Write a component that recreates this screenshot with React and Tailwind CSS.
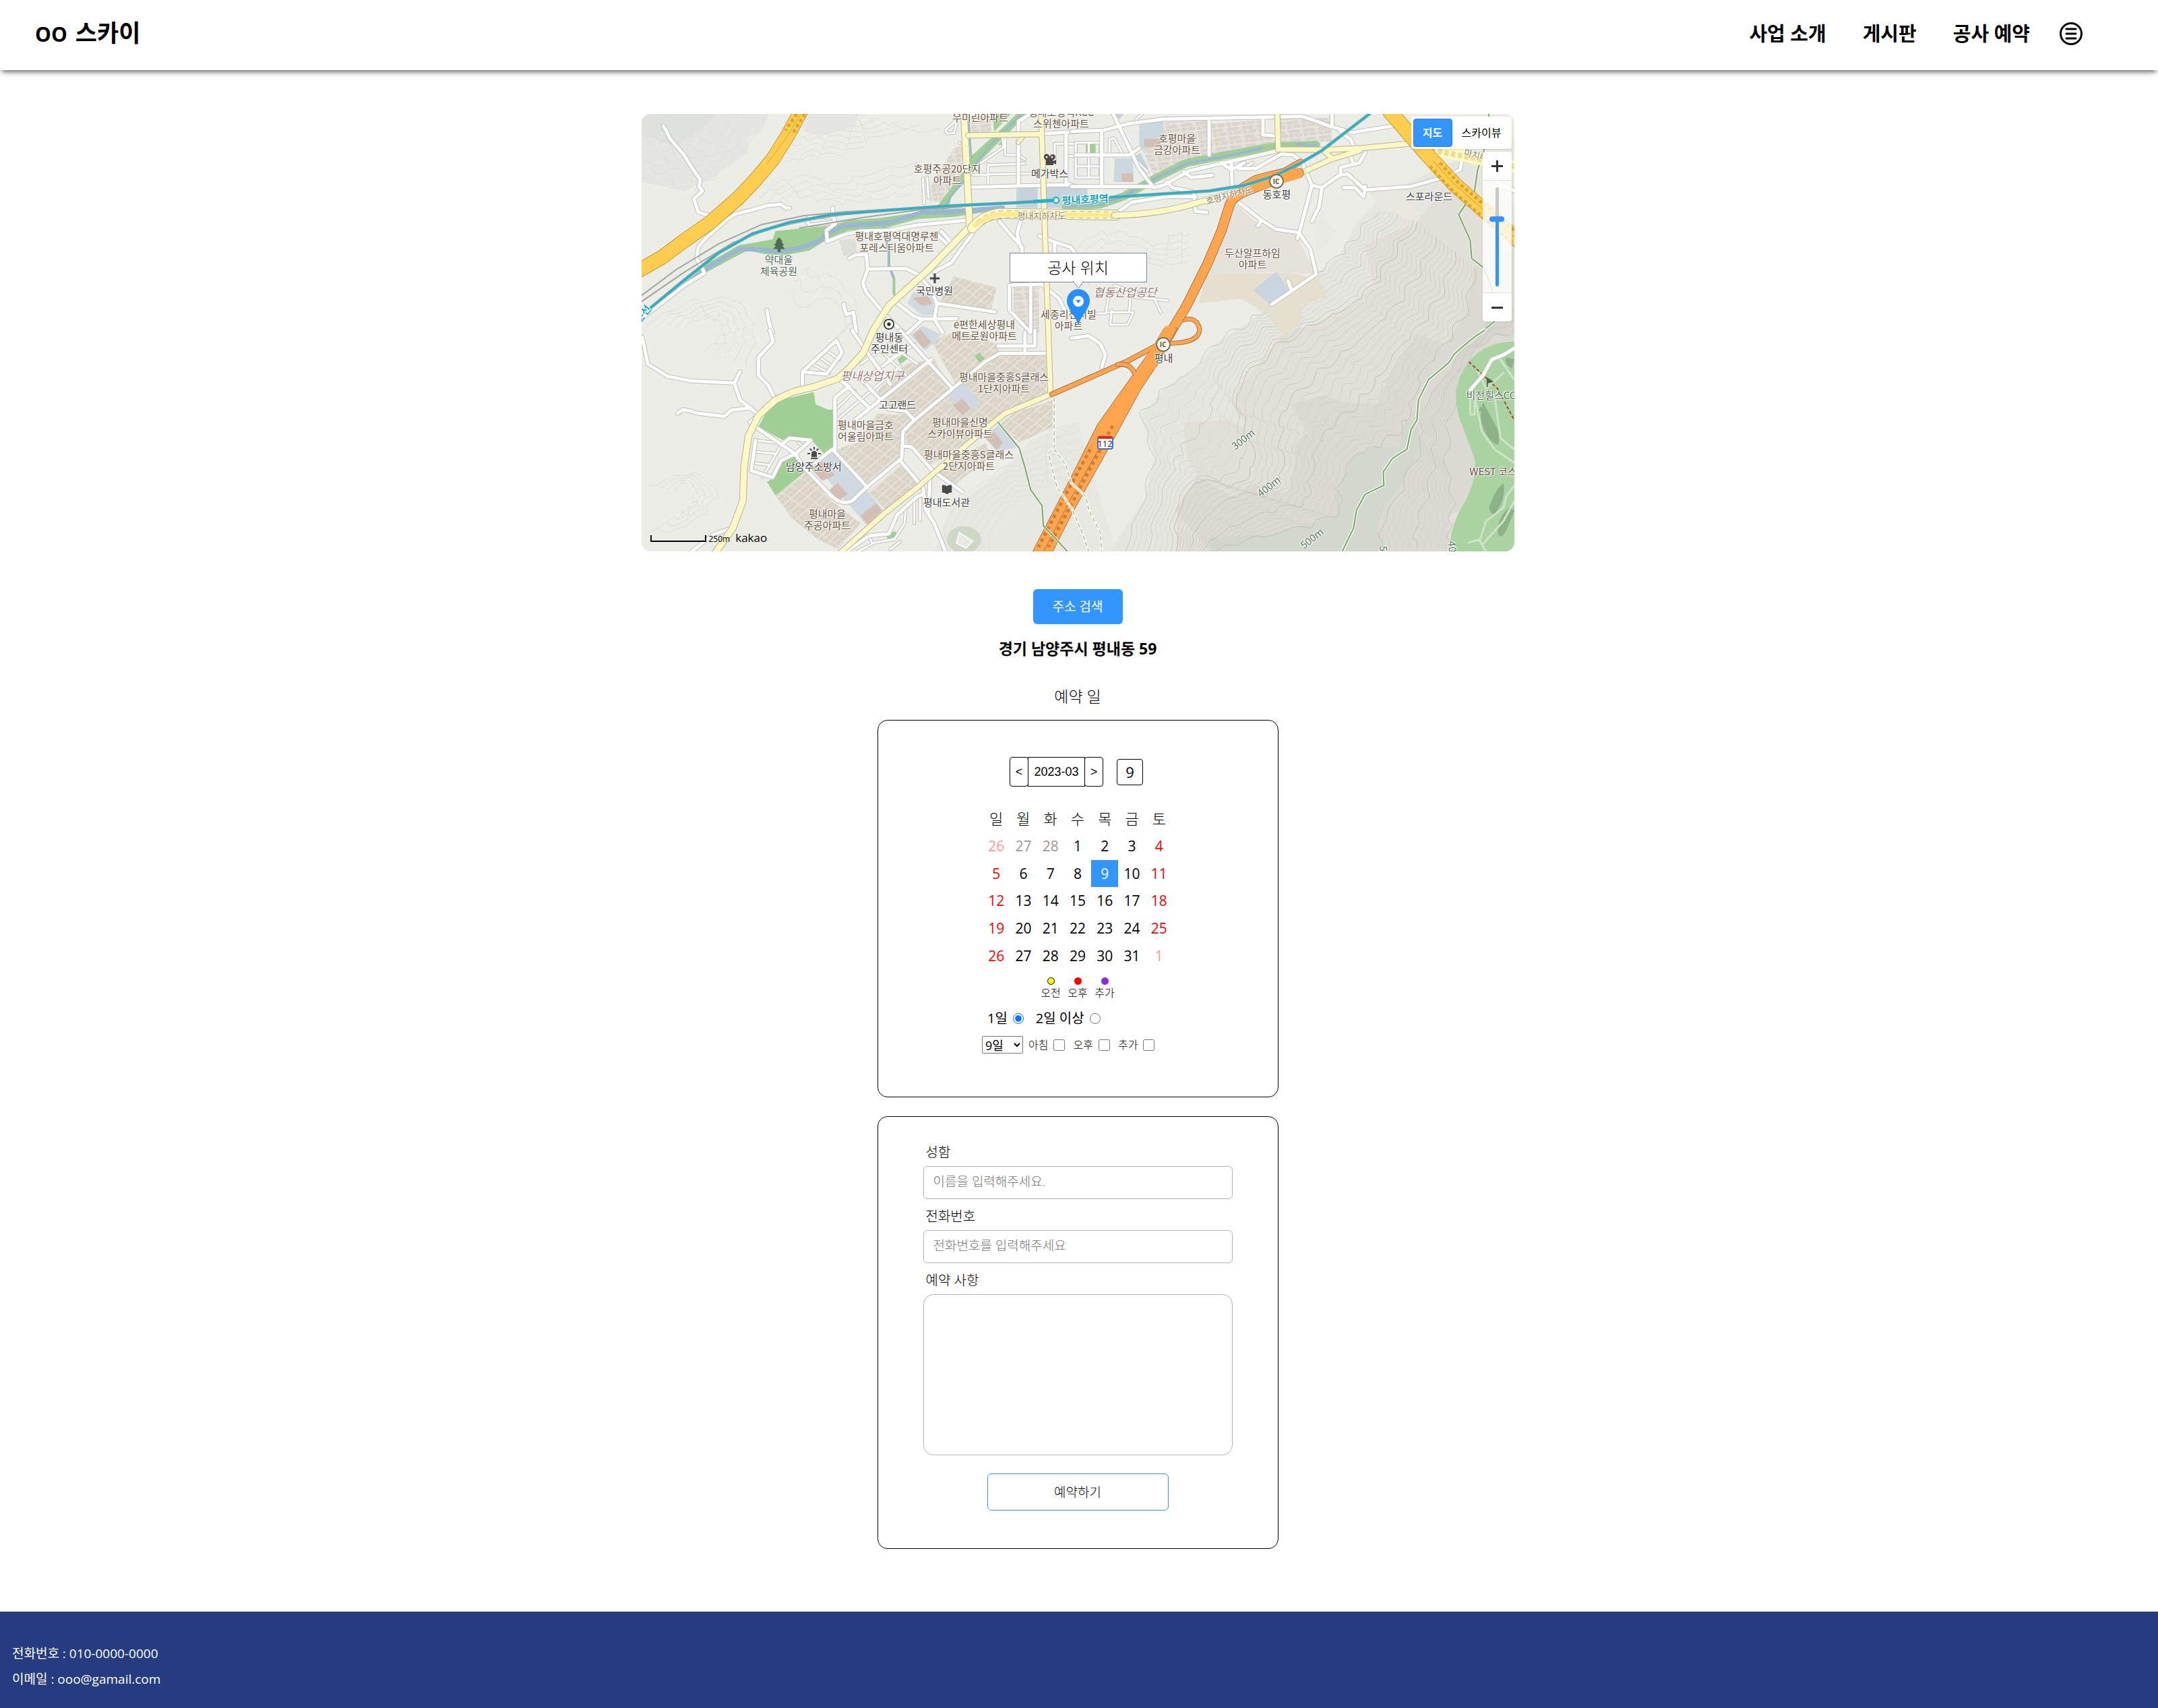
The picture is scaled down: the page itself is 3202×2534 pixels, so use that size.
import React from "react";

const MAP_W = 1295;
const MAP_H = 649;
const TR = "translate(1544 0) scale(1.0154 1)";
const BL = "translate(0 990)";
const BR = "translate(1544 990) scale(1.0154 1)";

/* ---------- terrain contours ---------- */

function refine(points) {
  const out = [];
  for (let i = 0; i < points.length - 1; i++) {
    const [x1, y1] = points[i];
    const [x2, y2] = points[i + 1];
    for (let s = 0; s < 4; s++) {
      const t = s / 4;
      const k = i * 4 + s;
      out.push([
        x1 + (x2 - x1) * t + 16 * Math.sin(k * 1.9),
        y1 + (y2 - y1) * t + 20 * Math.cos(k * 2.3),
      ]);
    }
  }
  out.push(points[points.length - 1]);
  return out;
}

function smooth(points) {
  let d = `M${points[0][0]} ${points[0][1]}`;
  for (let i = 1; i < points.length - 1; i++) {
    const mx = (points[i][0] + points[i + 1][0]) / 2;
    const my = (points[i][1] + points[i + 1][1]) / 2;
    d += `Q${points[i][0]} ${points[i][1]} ${mx} ${my}`;
  }
  const last = points[points.length - 1];
  return `${d}L${last[0]} ${last[1]}`;
}

function between(a, b, n) {
  const ra = refine(a);
  const rb = refine(b);
  return Array.from({ length: n + 1 }, (_, i) => {
    const t = i / n;
    return smooth(ra.map((p, k) => [p[0] + (rb[k][0] - p[0]) * t, p[1] + (rb[k][1] - p[1]) * t]));
  });
}

const SLOPE_OUT = [[180, 985], [250, 760], [290, 560], [240, 380], [330, 250], [420, 180], [500, 60], [620, -40], [700, -120], [820, -220], [930, -330], [990, -420], [1080, -560]];
const SLOPE_MID = [[360, 985], [370, 800], [440, 660], [570, 700], [640, 600], [600, 420], [570, 270], [690, 90], [830, -20], [960, -100], [1050, -200], [1120, -340], [1200, -480]];
const SLOPE_IN = [[480, 985], [620, 930], [830, 870], [940, 800], [920, 700], [980, 560], [1060, 520], [1150, 440], [1180, 330], [1220, 180], [1300, 60], [1370, -80], [1400, -280]];
const EAST_OUT = [[1070, 985], [1080, 860], [1150, 700], [1220, 500], [1200, 380], [1290, 220], [1380, 60], [1538, -100]];
const EAST_IN = [[1315, 985], [1310, 880], [1330, 760], [1300, 600], [1310, 400], [1360, 200], [1420, 60], [1538, 0]];

const WEST_LINES = [
  ...between([[30, 300], [120, 330], [220, 370], [300, 280], [370, 200], [440, 110], [480, 27]], [[30, 120], [80, 150], [120, 160], [170, 150], [220, 120], [250, 80], [290, 27]], 5),
  ...between([[620, 27], [600, 110], [680, 115], [780, 90], [800, 50], [790, 27]], [[480, 200], [560, 240], [640, 215], [760, 200], [850, 120], [1080, 90]], 4),
  ...between([[420, 360], [520, 330], [620, 300], [700, 350], [800, 300], [1000, 240]], [[500, 420], [560, 380], [640, 410], [760, 420], [860, 400], [980, 380]], 3),
  ...between([[40, 960], [200, 860], [350, 850], [400, 900], [430, 1000], [400, 1150]], [[180, 960], [250, 930], [280, 940], [320, 970], [300, 1040], [250, 1080]], 4),
  ...between([[40, 1880], [160, 1880], [260, 1800], [300, 1700], [200, 1620], [60, 1680]], [[160, 1800], [190, 1790], [215, 1750], [220, 1690], [180, 1660], [150, 1700]], 3),
  ...between([[540, 800], [600, 900], [660, 850], [720, 860], [760, 960], [700, 1050]], [[600, 700], [640, 760], [690, 740], [740, 790], [800, 900], [740, 1010]], 2),
  ...between([[1568, 600], [1640, 560], [1740, 560], [1850, 620], [1900, 560], [1960, 560]], [[1600, 780], [1640, 700], [1720, 740], [1820, 700], [1900, 690], [1960, 680]], 4),
  ...between([[1080, 1974], [1120, 1780], [1260, 1640], [1380, 1560], [1490, 1420], [1560, 1400]], [[1240, 1974], [1270, 1850], [1340, 1760], [1420, 1700], [1470, 1650], [1560, 1640]], 6),
];

/* ---------- map drawing ---------- */

function Line({ d, w, c, dash, cap = "round" }) {
  return (
    <path d={d} fill="none" stroke={c} strokeWidth={w} strokeDasharray={dash} strokeLinecap={cap} strokeLinejoin="round" vectorEffect="non-scaling-stroke" />
  );
}

function Road({ d, w, c = "#ffffff", edge = "#bfbeb7" }) {
  return (
    <>
      <Line d={d} w={w + 2} c={edge} />
      <Line d={d} w={w} c={c} />
    </>
  );
}

const LOCAL_TL = "M105 80L130 140L175 205L205 265L235 320L230 350L243 370L212 405L228 465L265 478M550 447L535 445L520 430L470 435L440 447L360 472L325 500L300 530L255 580L228 620L222 670L240 710L250 735L180 790L30 935M702 445V475L712 515L680 545L682 595L740 565L800 548L900 545L1000 522L1175 500M700 485H620Q605 505 622 522L700 510M1190 353L1530 342L1568 352M1450 115L1568 105M1400 27L1357 60V340M1525 110V330L1540 342M1290 505L1330 565L1370 620V650M1365 505L1352 560L1365 620M1430 570L1480 595L1540 620L1560 650M1485 600V645M1195 560L1165 610L1120 690L1060 730M1065 560L1110 610M1085 550L1120 600M760 670L780 655L820 652L825 718L960 715L1000 740L1045 800L1070 870L1275 908M825 720L808 780L820 820L900 940L960 1010M930 870L985 925L1015 940L1140 938M1070 870L1060 940L1090 1000M1020 940L960 1010M740 875L750 920L775 910L785 1000M470 900L478 960L490 1000M1325 790V900L1400 1000V780M1325 790L1440 785L1500 850L1520 900";
const MINOR_TL = "M1145 40L1135 60L1100 98L1105 115L1130 112L1138 70M1150 155V158M1020 315L1025 425M1035 310L1040 400M1225 245L1305 175L1300 130M1250 250V340M1195 298L1400 292M1250 255L1380 248M1310 210H1360L1380 230M1310 130V205M1485 160H1560V310M1485 160V240M1530 215H1568";
const LOCAL_TR = "M0 105L110 100L200 70L320 50L800 38L830 50L905 85L975 110L1115 80M145 27L235 270L285 355L320 345L410 280L530 245L720 190M0 350H280M478 50V210M665 45V120L715 125M905 27V80M165 460L210 420L330 395L430 395M330 330L350 355L425 375L430 460L470 465M390 285L415 310L490 300M555 245L558 345M520 245L555 275L600 245M580 270L640 270L730 205L770 210L800 240L820 300L835 345L870 355L930 300L960 295L1020 365L1180 350L1290 310L1350 275L1355 240M835 345L790 560M870 355L860 440L835 505M580 420L660 500L710 540L790 555L830 630L850 740L765 815L695 875M660 500L648 525M790 560L785 580M765 815L752 770M935 295V265L1000 245L1020 200M970 220L980 250M945 355H985L1015 395L1020 350M925 90L940 115L970 140L980 170M1475 330L1538 370M105 105V350M15 210H200L235 180";
const MINOR_TR = "M15 155H100V310H15ZM60 155V310M15 260H100M132 210V140L148 135L180 210M245 27L225 50M230 240L265 285M130 830L120 910H215L195 965H135L140 900M200 910L205 840L335 858M290 855L310 910M150 790L220 820L260 820M90 915H120M600 265L630 245";
const LOCAL_BL = "M30 30L50 150L120 205L200 225L355 235L375 185M355 235L375 310L440 375L410 410M155 370L175 352L230 370L320 383L345 355L415 345M480 0L492 50L440 120V200L475 245L500 310M595 260V185L715 45L735 100L680 195L595 185M710 530V300L760 250L725 220M770 0L830 110L905 240M940 0L1125 260M780 400L1050 130M700 530L640 590M1455 103H1290L1240 140L990 400L950 450L945 570L820 700L770 760Q735 780 700 740L600 610L570 550L430 430M705 535L825 700M740 230L830 345M820 240L900 350L960 360L990 400M945 515L980 518L1050 620L1160 720M940 580L1020 700L1030 800L1060 860L1100 985M430 490L415 625L490 655L520 580L570 550L625 490L550 480L520 510M1045 660L1040 820M750 985L830 915L900 905L930 820L1000 740L1020 730M205 985L280 910L335 885M1380 10V100M1285 70H1415V0";
const MINOR_BL = "M630 150L690 190M655 120L700 160M680 90L725 130M720 395L940 160M715 350L780 270M770 190L870 300M870 90L960 200M900 60L1000 150M800 150L880 80M830 210L960 70M880 160L990 60M520 510L455 655M430 490L500 500M425 540L500 550M420 590L480 600M580 500L600 520M960 790L955 860L920 930L850 945L790 985M990 760V860M1010 750V845M830 915L840 945M905 975L940 940";
const LOCAL_BR = "M0 35L60 25L100 60L118 110L105 165M1538 80L1500 110L1460 130L1430 200L1385 265";
const ESTATE_BL = [
  "M790 500L860 370L960 380L985 405L950 450L940 560L830 690L715 530Z",
  "M500 735L610 630L690 750L800 860L720 975L650 930L560 840Z",
  "M960 150L1060 130L1120 260L980 400L900 350L860 270Z",
  "M1050 50L1140 0L1280 60L1290 100L1140 250Z",
  "M1130 260L1240 140L1290 110H1455V300L1310 360L1230 450L1050 600L960 500L960 440Z",
  "M1340 370L1480 310V430L1360 500L1290 420Z",
  "M830 720L950 590L1010 690L890 800Z",
  "M1060 620L1100 600L1240 500L1260 560L1130 690Z",
];
const RAIL = "M60 890L180 765L300 645L420 560L550 510L700 475L900 455L1100 437L1350 422L1490 411M1681 398L1900 380L2031 370L2153 345L2255 305L2346 250L2427 190L2509 110L2595 27";

function MapDrawing() {
  return (
    <svg className="block h-full w-full" viewBox="28 27 3078 1947" preserveAspectRatio="none" aria-hidden="true">
      <defs>
        <pattern id="flats" width="46" height="38" patternUnits="userSpaceOnUse" patternTransform="rotate(-48)">
          <rect width="46" height="38" fill="#e3ded3" />
          <path d="M4 6h32v9H4zM4 24h14v9H4zM24 22h16v11H24z" fill="#dcd6c9" stroke="#d0c9bc" strokeWidth="2" />
          <path d="M0 0H46" stroke="#ebe8e0" strokeWidth="4" />
        </pattern>
        <pattern id="flatsEast" width="52" height="40" patternUnits="userSpaceOnUse" patternTransform="rotate(-8)">
          <rect width="52" height="40" fill="#e5e1d9" />
          <path d="M5 6h34v10H5zM5 24h10v12H5zM24 25h22v9H24z" fill="#ddd8cd" stroke="#d0cabf" strokeWidth="2" />
          <path d="M0 0H52" stroke="#eeece6" strokeWidth="4" />
        </pattern>
      </defs>
      <rect x="28" y="27" width="3078" height="1947" fill="#ecede7" />

      {/* hills */}
      <path d="M28 27H480L440 110L400 130L405 200L330 260L290 300L180 370L28 330Z" fill="#e5e6e1" />
      <path d="M28 27H290L250 80L150 170L28 120Z" fill="#dfe1dc" />
      <path d="M620 27L600 100L660 125L780 85L790 27Z" fill="#e5e6e1" />
      <path d="M1060 1974L1120 1780L1300 1620L1400 1480L1568 1400L1700 1974Z" fill="#e8e8e2" />
      <g transform={BR}>
        <path d="M130 985L250 760L290 560L240 380L330 250L420 180L500 60L620 -40L700 -120L820 -220L930 -330L990 -480L1080 -600L1270 -720L1540 -860V985Z" fill="#e6e6e0" />
        <path d="M360 985L370 800L440 660L400 560L390 410L540 400L620 440L570 370L570 270L690 90L750 0L830 -20L960 -100L1050 -200L1020 -380L1200 -480L1290 -620L1540 -560V985Z" fill="#e0dfd8" />
        <path d="M480 985L360 800L440 650L550 740L640 690L750 730L770 640L780 500L820 450L760 330L880 290L950 320L1060 330L1110 180L1200 20L1300 60L1370 -80L1400 -280L1540 -360V985Z" fill="#dadad3" />
        <path d="M480 985V920L700 910L930 820L910 740L980 560L1050 520L1140 520L1160 400L1190 390L1220 500L1150 680L1090 780L1060 880L1095 985Z" fill="#d3d8cf" />
        <path d="M1315 985L1310 820L1360 800V985Z" fill="#e1e0da" />
        {between(SLOPE_OUT, SLOPE_MID, 9).map((d, i) => <Line key={i} d={d} w={1} c={i % 4 === 0 ? "#c9c9c0" : "#d8d8d1"} />)}
        {between(SLOPE_MID, SLOPE_IN, 15).map((d, i) => <Line key={i} d={d} w={1} c={i % 5 === 0 ? "#c0c0b7" : "#d0d0c8"} />)}
        {between(EAST_OUT, EAST_IN, 10).map((d, i) => <Line key={i} d={d} w={1} c={i % 5 === 0 ? "#c2c2b9" : "#d2d2ca"} />)}
      </g>
      {WEST_LINES.map((d, i) => <Line key={i} d={d} w={1} c="#dddfd8" />)}

      {/* land use */}
      <g transform={TR}>
        <path d="M570 430L650 520L780 560L850 740L700 730L560 740H480L540 500Z" fill="#e5e2dc" />
        <path d="M470 740L760 735L860 760L890 840L800 880V960L740 1020L680 920L590 850L440 870Z" fill="#e4dfcf" />
        <path d="M840 540L870 455L918 550L890 600L850 640Z" fill="#e9eae4" />
        <path d="M1030 360L1150 350L1210 470L1170 500L1120 460L1070 460Z" fill="#e9e8e0" />
        <path d="M712 728L755 815L690 875L632 810Z" fill="#c8d5de" />
        <path d="M240 70L470 55V215L290 310L240 170Z" fill="url(#flatsEast)" />
        <path d="M484 70L660 55V130L710 130V165L560 195L484 210Z" fill="url(#flatsEast)" />
        <path d="M725 45L900 45L905 150L730 155Z" fill="url(#flatsEast)" />
        <path d="M235 75L318 55V130L300 175H235Z" fill="#ccd8e0" />
        <path d="M252 138h58v36h-58z" fill="#d3bfb3" />
        <path d="M150 225h62l5 105h-70z" fill="#ccd8e0" />
        <path d="M174 292h40v38h-40z" fill="#d3bfb3" />
        <path d="M50 160h34v46H50z" fill="#9fcf95" />
        <path d="M220 215l20 -15 28 70 -22 14z" fill="#c6d3dd" />
        <path d="M145 27h36l-14 24z" fill="#c6d3dd" />
      </g>
      <path d="M1350 355h75v90h-75z" fill="#c6d3dd" />
      <path d="M1455 345H1600V445H1455z" fill="#c6d3dd" />
      <path d="M1190 40h70v70h-70zM1045 350L1130 180L1160 170V320L1100 420H1045Z" fill="url(#flatsEast)" />
      <path d="M1080 860L1130 750L1280 800L1260 900Z" fill="url(#flats)" />
      <path d="M1340 800H1430V1000H1400L1340 900Z" fill="url(#flatsEast)" />
      <path d="M725 590L780 580L790 650L740 660Z" fill="#dedfd9" />
      <path d="M965 870L985 820L1050 830L1065 920L1020 925Z" fill="#d1dae1" />
      <path d="M985 845l50 -8 22 35 -42 10z" fill="#d3bfb3" />
      <g transform={BL}>
        {ESTATE_BL.map((d) => <path key={d} d={d} fill="url(#flats)" />)}
        <path d="M640 600L705 535L880 800L820 865Z" fill="#d0d9e1" />
        <path d="M1110 290L1165 235L1225 325L1165 380Z" fill="#d0d9e1" />
        <path d="M1235 470L1290 420L1355 520L1280 540Z" fill="#d0d9e1" />
        <path d="M975 20L1020 -20L1085 20L1030 90Z" fill="#d0d9e1" />
        <path d="M625 615l40 -30 45 60 -45 25zM690 710l30 -30 35 50 -30 25zM800 825l55 -55 20 35 -50 60zM1125 335l35 -30 28 42 -28 30zM1240 480l32 -30 30 50 -20 32zM985 20l25 -25 40 60 -30 26z" fill="#d3bfb3" />
        <path d="M440 430L470 360L520 310L635 275L642 330L685 353H708V530L675 555L625 485L560 475L525 488ZM470 675L490 660L520 585L575 560L610 625L500 735ZM930 130l30 -30 15 20 -35 30zM1203 115l15 -15 20 25 -18 20zM890 915l30 -22 12 18 -35 20z" fill="#9fcf95" />
        <ellipse cx="1165" cy="932" rx="60" ry="60" fill="#cfd7c5" />
        <path d="M1148 900l48 38 -24 32 -34 -22z" fill="#e8e9e2" stroke="#fff" strokeWidth="4" />
      </g>

      {/* parks and streams */}
      <path d="M180 790L250 700L370 612L490 585L500 548L690 525L760 500L870 490L1060 455L1160 290L1190 215L1300 90L1350 27H1390L1290 150L1220 240L1120 400L1110 450L1310 440V450L1130 485L1000 495L890 535L760 545L690 580L620 635L540 655H480L400 635L260 730Z" fill="#9fcf95" />
      <path d="M1265 27L1272 105L1330 27ZM1285 165L1308 130V168Z" fill="#9fcf95" />
      <Line d="M880 520L900 640V700L918 760V830" w={4} c="#9fcf95" />
      <Line d="M180 790L260 712L370 630L420 628L520 640L590 622L650 595L690 555L740 525L850 515L900 510L1020 465L1100 465L1300 445" w={7} c="#9bb7d0" />
      <Line d="M1090 460L1120 390L1170 320M1200 260L1255 170L1370 27M1180 27L1190 220M880 515L900 640V700L918 760" w={3} c="#9bb7d0" />
      <g transform={TR}>
        <Line d="M-20 440L100 430L180 395L290 315L400 245L560 205L700 172L850 164" w={12} c="#9fcf95" />
        <Line d="M-20 440L100 430L180 395L290 315L400 248L560 208L660 180M780 162L850 166" w={4} c="#9bb7d0" />
      </g>

      {/* golf course */}
      <g transform={BR}>
        <path d="M1538 50Q1440 50 1380 140Q1310 260 1350 400L1400 570Q1410 680 1350 800Q1310 900 1315 985H1540Z" fill="#a9d3a0" />
        <path d="M1430 320q-18 60 2 120q20 60 50 70q10 -50 -10 -90q-22 -50 -42 -100zM1500 680q-30 30 -50 110q10 50 30 10q30 -60 20 -120zM1520 790q-40 40 -40 110q10 40 30 -10q20 -60 30 -90zM1510 120q-10 30 20 50l8 -40zM1420 340q-14 40 10 10z" fill="#8db287" />
        <Line d="M1400 290L1425 450L1470 530L1538 590M1470 300L1490 480L1538 530M1410 180L1440 260L1500 190M1538 690L1510 740L1500 790L1440 850L1420 930L1380 945M1538 760L1500 850L1430 950M1490 130L1538 220M1385 300V375H1400V320M1415 930L1440 985" w={3} c="#cfe3c8" />
        <Line d="M1380 140L1480 260L1538 400" w={2} c="#b5442c" dash="5 3" cap="butt" />
      </g>

      {/* local roads */}
      <Road d={MINOR_TL} w={3} />
      <Road d={LOCAL_TL} w={5} />
      <g transform={TR}>
        <Road d={MINOR_TR} w={3} />
        <Road d={LOCAL_TR} w={5} />
      </g>
      <g transform={BL}>
        <Road d={MINOR_BL} w={3} />
        <Road d={LOCAL_BL} w={5} />
      </g>
      <g transform={BR}>
        <Road d={LOCAL_BR} w={5} />
      </g>

      {/* trails */}
      <g transform={TR}>
        <Line d="M1450 27V90L1435 180L1410 280L1400 370L1345 475L1385 590L1390 670L1430 710L1460 800L1470 950L1400 1020" w={4} c="#f4f5ef" />
        <Line d="M1450 27V90L1435 180L1410 280L1400 370L1345 475L1385 590L1390 670L1430 710L1460 800L1470 950L1400 1020" w={2} c="#7ba66a" />
      </g>
      <g transform={BR}>
        <Line d="M1435 0L1405 25L1380 50L1330 105L1310 145L1240 220L1205 310L1200 400L1180 440L1165 530L1115 570L1083 630L1085 690L1020 730L990 800L980 880L940 985" w={5} c="#f4f5ef" />
        <Line d="M1435 0L1405 25L1380 50L1330 105L1310 145L1240 220L1205 310L1200 400L1180 440L1165 530L1115 570L1083 630L1085 690L1020 730L990 800L980 880L940 985" w={2} c="#7ba66a" />
      </g>

      {/* yellow roads */}
      <Road d="M1165 27L1185 530L1040 720L900 880L845 990L810 1090L760 1160L720 1205L640 1240L560 1265L500 1300L440 1370L405 1460L390 1590L385 1750L350 1870L285 1985" w={9} c="#fdf8c4" edge="#b5b29b" />
      <Road d="M1378 120L1356 155" w={5} c="#fdf8c4" edge="#b5b29b" />
      <Road d="M1180 123L1435 117M1437 27L1453 650L1470 1275L1310 1360L1240 1430L1100 1580L1000 1690L880 1810L720 1990" w={7} c="#fdf8c4" edge="#b5b29b" />
      <Road d="M1195 535Q1230 480 1290 470L1700 477" w={14} c="#fdf8c4" edge="#b5b29b" />
      <Line d="M1200 530Q1240 480 1300 473L1695 477" w={6} c="#ffe88a" cap="butt" />
      <Line d="M1210 505Q1250 460 1310 458L1695 463M1230 520Q1260 490 1320 488L1695 491" w={1} c="#b5b29b" dash="7 5" cap="butt" />
      <g transform={TR}>
        <Road d="M150 478Q300 475 430 425L600 365" w={8} c="#fdf8c4" edge="#b5b29b" />
        <Road d="M715 27L718 185L890 187L1000 180L1170 160M805 285L900 230L1000 190M880 195L905 225" w={7} c="#fdf8c4" edge="#b5b29b" />
        <Line d="M1240 185L1400 222L1538 262" w={18} c="#fdf8c4" />
        <Line d="M1250 188L1400 224L1538 262" w={8} c="#f0dc8c" dash="6 4" cap="butt" />
      </g>

      {/* expressways */}
      <Road d="M590 15L540 130L490 230L430 320L370 400L270 510L180 590L100 665L10 730" w={20} c="#ffcd50" edge="#c79b34" />
      <Line d="M590 27L540 130L470 250" w={1} c="#d9a62f" />
      <Line d="M575 27L535 100M603 27L563 110" w={5} c="#d9a62f" dash="5 4" cap="butt" />
      <g transform={TR}>
        <Road d="M1105 15L1230 200L1330 340L1450 475L1570 610" w={21} c="#ffcd50" edge="#c79b34" />
        <Line d="M1255 235L1330 340L1450 475L1560 600" w={1} c="#c79b34" />
        <Line d="M1245 260L1320 365L1440 500L1545 620M1280 245L1345 335L1465 465L1570 580" w={5} c="#dba62a" dash="5 4" cap="butt" />
        <Road d="M385 945Q435 925 445 985Q445 1045 345 1048" w={5} c="#ffa54d" edge="#a8714a" />
        <Road d="M795 240L740 280L640 312L590 350" w={7} c="#ffa54d" edge="#a8714a" />
        <Road d="M790 290L700 325L610 368Q560 395 550 430L520 550L470 700L400 880L330 1030" w={13} c="#ffa54d" edge="#a8714a" />
        <Line d="M785 292L700 322L620 355" w={16} c="#ffa54d" />
      </g>
      <g transform={BR}>
        <Road d="M-68 285L190 140L300 65" w={6} c="#ffa54d" edge="#a8714a" />
        <path d="M368 -10L300 150L240 265L140 500L0 820L-65 985H-135L0 650L90 420L215 195L280 80L322 -10Z" fill="#ffa54d" stroke="#a8714a" vectorEffect="non-scaling-stroke" />
        <Road d="M160 152Q205 145 219 192" w={5} c="#ffa54d" edge="#a8714a" />
        <path d="M362 -20L290 170L210 220L328 -20Z" fill="#ffa54d" />
        <Line d="M143 425L10 750L-80 965M65 530L-20 730L-115 965" w={5} c="#c97f35" dash="5 5" cap="butt" />
        <Line d="M90 540L0 745L-95 980" w={1} c="#a8714a" />
        <Line d="M-60 300V520L-80 550L-50 700L0 790L40 910L60 985M-60 530L-20 600L0 680L50 740L60 800L100 900L105 985" w={4} c="#f6f8f0" />
        <Line d="M-60 300V520L-80 550L-50 700L0 790L40 910L60 985M-60 530L-20 600L0 680L50 740L60 800L100 900L105 985" w={1} c="#83a873" dash="6 4" cap="butt" />
      </g>
      <g transform={BL}>
        <Line d="M1285 410L1360 525L1380 610L1400 710L1440 780L1445 870L1490 930L1530 985" w={4} c="#f4f5ef" />
        <Line d="M1285 410L1360 525L1380 610L1400 710L1440 780L1445 870L1490 930L1530 985" w={2} c="#7ba66a" />
      </g>

      {/* railway */}
      <Line d="M28 835L150 720L300 605L450 520L600 480L750 462L1080 440M28 862L180 730L350 600L500 530L650 492L800 465M585 535L800 490L1000 455L1160 440" w={2} c="#a5a5a1" />
      <Line d={RAIL} w={5} c="#9aa9a9" />
      <Line d={RAIL} w={3} c="#22b4c8" />
      <Line d="M1410 417L1490 411" w={5} c="#22b4c8" cap="butt" />
    </svg>
  );
}

const KINDS = {
  flat: "text-[15px] text-[#67523a]",
  place: "text-[15px] text-[#3b3b3b]",
  park: "text-[15px] text-[#4f6a50]",
  zone: "text-[17px] italic text-[#947872]",
  rail: "text-[15px] font-bold text-[#14a5bd]",
  road: "text-[13px] text-[#8c7f5c]",
  height: "text-[15px] text-[#5c7558]",
  golf: "text-[15px] text-[#6d4d40]",
};

const LABELS = [
  [503, 4, "우미린아파트", "flat"],
  [623, 5, "평내호평역KCC\n스위첸아파트", "flat"],
  [606, 87, "메가박스", "place"],
  [454, 89, "호평주공20단지\n아파트", "flat"],
  [658, 126, "평내호평역", "rail", -3],
  [594, 150, "평내지하차도", "road"],
  [204, 224, "약대울\n체육공원", "park"],
  [379, 189, "평내호평역대명루첸\n포레스티움아파트", "flat"],
  [435, 261, "국민병원", "place"],
  [509, 320, "e편한세상평내\n메트로원아파트", "flat"],
  [368, 339, "평내동\n주민센터", "place"],
  [634, 305, "세종리젠시빌\n아파트", "flat"],
  [718, 263, "협동산업공단", "zone"],
  [795, 44, "호평마을\n금강아파트", "flat"],
  [943, 118, "동호평", "place"],
  [873, 120, "호평지하차도", "road", -15],
  [1169, 121, "스포라운드", "place"],
  [907, 214, "두산알프하임\n아파트", "flat"],
  [1244, 62, "마치터널", "road", 14],
  [775, 361, "평내", "place"],
  [892, 482, "300m", "height", -38],
  [930, 552, "400m", "height", -38],
  [994, 629, "500m", "height", -38],
  [1204, 646, "400", "height", 85],
  [1101, 645, "5", "height", 90],
  [1261, 416, "비전힐스CC", "park"],
  [1264, 529, "WEST 코스", "golf"],
  [343, 387, "평내상업지구", "zone"],
  [380, 430, "고고랜드", "place"],
  [538, 398, "평내마을중흥S클래스\n1단지아파트", "flat"],
  [333, 469, "평내마을금호\n어울림아파트", "flat"],
  [473, 465, "평내마을신명\n스카이뷰아파트", "flat"],
  [486, 513, "평내마을중흥S클래스\n2단지아파트", "flat"],
  [256, 522, "남양주소방서", "place"],
  [276, 601, "평내마을\n주공아파트", "flat"],
  [453, 575, "평내도서관", "place"],
  [2, 296, "춘선", "rail", -50],
];

function at(x, y, turn = 0) {
  return {
    left: `${(x / MAP_W) * 100}%`,
    top: `${(y / MAP_H) * 100}%`,
    transform: `translate(-50%, -50%) rotate(${turn}deg)`,
  };
}

function Marker({ x, y, size = 20, children }) {
  return (
    <svg className="absolute" style={at(x, y)} width={size} height={size} viewBox="0 0 20 20" aria-hidden="true">
      {children}
    </svg>
  );
}

function Markers() {
  return (
    <>
      <Marker x={615} y={128} size={12}><circle cx="10" cy="10" r="7" fill="#fff" stroke="#22b4c8" strokeWidth="4" /></Marker>
      <Marker x={606} y={69}>
        <path d="M1 5a4 4 0 0 1 8-1h1a4 4 0 1 1 4 5l1 2 4-2v7l-4-2v3H4V9A4 4 0 0 1 1 5z" fill="#4a4744" />
        <circle cx="5" cy="5" r="1.5" fill="#fff" /><circle cx="13" cy="5" r="1.5" fill="#fff" />
      </Marker>
      <Marker x={204} y={194} size={22}><path d="M10 0l5 6h-2l4 5h-3l4 5h-6v4H8v-4H2l4-5H3l4-5H5z" fill="#4f6a50" /></Marker>
      <Marker x={435} y={244} size={16}><path d="M8 1h4v7h7v4h-7v7H8v-7H1V8h7z" fill="#4a4a4a" /></Marker>
      <Marker x={367} y={312} size={18}><circle cx="10" cy="10" r="8" fill="#fff" stroke="#333" strokeWidth="2" /><circle cx="10" cy="10" r="3" fill="#333" /></Marker>
      <Marker x={256} y={503}><path d="M5 17h10v2H5zM6 16v-5a4 4 0 0 1 8 0v5zM9 1h2v4H9zM3 4l2-1 2 3-2 1zM17 4l-2-1-2 3 2 1zM0 10h4v2H0zM16 10h4v2h-4z" fill="#4a4a4a" /></Marker>
      <Marker x={453} y={557} size={18}><path d="M2 3q5-1 8 2q3-3 8-2v12q-5 0-8 3q-3-3-8-3z" fill="#4a4a4a" /></Marker>
      <Marker x={1258} y={398} size={16}><path d="M5 1l13 8-11 3v7H5z" fill="#4f5f4c" /></Marker>
      {[[942, 100], [774, 342]].map(([x, y]) => (
        <span key={x} style={at(x, y)} className="absolute flex size-[22px] items-center justify-center rounded-full border-2 border-[#7d735f] bg-[#fbfae8] text-[10px] leading-3 font-bold text-[#5d5444]">IC</span>
      ))}
      <span style={at(688, 488)} className="absolute flex h-5 w-6 items-end justify-center rounded-sm border-2 border-t-4 border-[#3d6fd8] border-t-[#df2a20] bg-white text-[13px] leading-[14px] text-[#222]">112</span>
    </>
  );
}

function ConstructionMap() {
  return (
    <section aria-label="공사 위치 지도" className="relative aspect-[1295/649] w-full max-w-[1295px] overflow-hidden rounded-[14px] bg-[#ecede7]">
      <MapDrawing />
      {LABELS.map(([x, y, text, kind, turn]) => (
        <span key={`${x}-${y}`} style={at(x, y, turn)} className={`absolute text-center font-['Noto_Sans_CJK_KR',sans-serif] leading-[17px] whitespace-pre [text-shadow:0_0_2px_#fff,0_0_2px_#fff,1px_1px_1px_#fff,-1px_-1px_1px_#fff] ${KINDS[kind]}`}>
          {text}
        </span>
      ))}
      <Markers />

      <svg className="absolute" style={at(648, 287)} width="36" height="54" viewBox="0 0 36 54" aria-hidden="true">
        <path d="M18 54C15 40 1 30 1 17a17 17 0 0 1 34 0C35 30 21 40 18 54z" fill="#258fff" />
        <circle cx="18" cy="18" r="8" fill="#fff" />
        <path d="M14 16h8l-4 5z" fill="#3a8ee6" />
      </svg>
      <div style={at(648, 228)} className="absolute flex h-11 w-[204px] items-center justify-center border border-[#7a83b0] bg-white text-[23px] leading-7 font-light text-black">
        공사 위치
        <svg className="absolute top-full left-1/2 -mt-px -translate-x-1/2" width="16" height="12" viewBox="0 0 16 12" aria-hidden="true">
          <path d="M0 0L8 11L16 0" fill="#fff" stroke="#7a83b0" />
          <path d="M1 0h14" stroke="#fff" strokeWidth="2" />
        </svg>
      </div>

      <div className="absolute top-1 right-1 flex h-12 items-stretch rounded-[4px] bg-white p-0.5 shadow">
        <button type="button" className="m-px w-[58px] rounded-[4px] border border-[#2a7fdd] bg-[#3396ff] text-[16px] font-bold text-white">지도</button>
        <button type="button" className="w-[85px] text-[16px] text-black">스카이뷰</button>
      </div>
      <div className="absolute top-14 right-1 flex w-[43px] flex-col overflow-hidden rounded-[4px] shadow">
        <button type="button" aria-label="확대" className="flex h-[43px] items-center justify-center border-b border-[#ddd] bg-white">
          <svg width="17" height="17" viewBox="0 0 17 17"><path d="M8.500 0v17M0 8.500h17" stroke="#333" strokeWidth="3" /></svg>
        </button>
        <div className="flex h-[166px] flex-col items-center bg-white/80 pt-2.5">
          <div className="h-[43px] w-[5px] rounded-t bg-[#c8c8c8]" />
          <div className="h-2 w-[22px] rounded-sm bg-[#3396ff] shadow" />
          <div className="h-24 w-[5px] rounded-b bg-[#3396ff]" />
        </div>
        <button type="button" aria-label="축소" className="flex h-[43px] items-center justify-center border-t border-[#ddd] bg-white">
          <svg width="17" height="3" viewBox="0 0 17 3"><path d="M0 1.500h17" stroke="#333" strokeWidth="3" /></svg>
        </button>
      </div>

      <div className="absolute bottom-2.5 left-[13px] flex items-end gap-1 text-black">
        <span className="mb-1 h-2.5 w-[83px] border-2 border-t-0 border-black" />
        <span className="text-[12px] leading-4">250m</span>
        <span className="ml-1 text-[17px] leading-5">kakao</span>
      </div>
    </section>
  );
}

/* ---------- page ---------- */

const DAYS = ["일", "월", "화", "수", "목", "금", "토"];
const WEEKS = [
  [26, 27, 28, 1, 2, 3, 4],
  [5, 6, 7, 8, 9, 10, 11],
  [12, 13, 14, 15, 16, 17, 18],
  [19, 20, 21, 22, 23, 24, 25],
  [26, 27, 28, 29, 30, 31, 1],
];

function dayClass(week, col, day) {
  const other = (week === 0 && day > 20) || (week === 4 && day < 10);
  const holiday = col === 0 || col === 6;
  if (week === 1 && day === 9) return "bg-[#3396ff] text-white";
  if (other) return holiday ? "text-[#ff9999]" : "text-[#999999]";
  return holiday ? "text-[#ff0000]" : "text-black";
}

function Calendar() {
  return (
    <table className="mt-[26px] h-[245px] w-[282px] table-fixed border-collapse text-center text-[21px] leading-7">
      <thead>
        <tr className="h-[42px]">
          {DAYS.map((d) => <th key={d} scope="col" className="p-0 text-[22px] font-light">{d}</th>)}
        </tr>
      </thead>
      <tbody>
        {WEEKS.map((week, w) => (
          <tr key={w} className="h-10">
            {week.map((day, c) => <td key={c} className={`p-0 ${dayClass(w, c, day)}`}>{day}</td>)}
          </tr>
        ))}
      </tbody>
    </table>
  );
}

const LEGEND = [
  ["오전", "border border-black bg-[#ffff00]"],
  ["오후", "bg-[#ff0000]"],
  ["추가", "bg-[#8a2be2]"],
];

function BookingDate() {
  return (
    <section className="flex h-[560px] w-full max-w-[595px] flex-col items-center rounded-[15px] border border-black pt-[54px]">
      <div className="flex items-center gap-5">
        <div className="flex h-11 font-['Liberation_Sans',sans-serif] text-[18px] leading-6">
          <button type="button" aria-label="이전 달" className="w-7 rounded-[4px] border border-black">&lt;</button>
          <button type="button" className="-mx-px w-[85px] border border-black">2023-03</button>
          <button type="button" aria-label="다음 달" className="w-7 rounded-[4px] border border-black">&gt;</button>
        </div>
        <button type="button" className="mr-1 size-[39px] rounded-[4px] border border-black text-[22px] leading-7">9</button>
      </div>
      <Calendar />
      <ul className="mt-3 flex">
        {LEGEND.map(([name, dot]) => (
          <li key={name} className="flex w-10 flex-col items-center text-[16px] leading-5 font-light">
            <span className={`mb-0.5 size-[11px] rounded-full ${dot}`} />
            {name}
          </li>
        ))}
      </ul>
      <div className="w-[284px]">
        <div className="mt-3.5 flex gap-[18px] pl-2 text-[20px] leading-7">
          <label className="flex items-center gap-2">1일<input type="radio" name="span" defaultChecked className="size-4" /></label>
          <label className="flex items-center gap-2">2일 이상<input type="radio" name="span" className="size-4" /></label>
        </div>
        <div className="mt-3 flex items-center gap-3 text-[16px] leading-5 font-light">
          <select aria-label="예약 일" defaultValue="9일" className="-mr-1 h-[26px] w-[61px] rounded-xs border border-[#767676] bg-white text-[18px] leading-6 font-normal">
            <option>9일</option>
          </select>
          {["아침", "오후", "추가"].map((name) => (
            <label key={name} className="flex items-center gap-2">{name}<input type="checkbox" className="size-[17px]" /></label>
          ))}
        </div>
      </div>
    </section>
  );
}

function BookingForm() {
  return (
    <form className="mt-7 flex h-[642px] w-full max-w-[595px] flex-col rounded-[15px] border border-black px-[67px] pt-[39px] text-[20px] leading-7 font-light" onSubmit={(e) => e.preventDefault()}>
      <label htmlFor="name" className="pl-1">성함</label>
      <input id="name" placeholder="이름을 입력해주세요." className="mt-1.5 h-[49px] rounded-md border border-[#b3b3b3] px-3.5 pb-1 text-[19px] placeholder:text-[#757575]" />
      <label htmlFor="phone" className="mt-3 pl-1">전화번호</label>
      <input id="phone" placeholder="전화번호를 입력해주세요" className="mt-1.5 h-[49px] rounded-md border border-[#b3b3b3] px-3.5 pb-1 text-[19px] placeholder:text-[#757575]" />
      <label htmlFor="memo" className="mt-3 pl-1">예약 사항</label>
      <textarea id="memo" className="mt-1.5 h-[239px] resize-none rounded-[15px] border border-[#b3b3b3] px-3.5 py-2" />
      <button type="submit" className="mt-[27px] h-[55px] w-[269px] self-center rounded-md border border-[#3396ff] text-[19px]">예약하기</button>
    </form>
  );
}

function MenuIcon() {
  return (
    <svg width="34" height="34" viewBox="0 0 34 34" fill="none" stroke="#000" aria-hidden="true">
      <circle cx="17" cy="17" r="15.500" strokeWidth="3" />
      <path d="M10 10h14M10 17h14M10 24h14" strokeWidth="3" strokeLinecap="round" />
    </svg>
  );
}

export default function App() {
  return (
    <div className="flex min-h-screen flex-col bg-white font-['Open_Sans','Noto_Sans_CJK_KR',sans-serif] text-black">
      <header className="flex h-[104px] items-center justify-between pr-28 pb-1 pl-[52px] font-bold shadow-[0_5px_8px_-3px_rgba(0,0,0,0.7)]">
        <a href="#home" className="flex items-baseline gap-3 text-[35px] leading-[52px]"><span className="text-[30px]">OO</span>스카이</a>
        <nav className="flex items-center gap-[54px] text-[29px] leading-10">
          <a href="#about">사업 소개</a>
          <a href="#board">게시판</a>
          <a href="#booking">공사 예약</a>
          <button type="button" aria-label="메뉴" className="-ml-2.5"><MenuIcon /></button>
        </nav>
      </header>
      <main className="flex flex-col items-center pt-[65px] pr-1 pb-[93px]">
        <ConstructionMap />
        <button type="button" className="mt-14 h-[52px] w-[133px] rounded-md bg-[#3396ff] text-[19px] leading-7 text-white">주소 검색</button>
        <p className="mt-5 text-[23px] leading-8 font-bold">경기 남양주시 평내동 59</p>
        <h2 className="mt-[39px] mb-[19px] text-[23px] leading-8 font-light">예약 일</h2>
        <BookingDate />
        <BookingForm />
      </main>
      <footer className="flex-1 bg-[#253c80] px-[18px] pt-[43px] text-[19px] leading-[38px] text-white">
        <p>전화번호 : 010-0000-0000</p>
        <p>이메일 : ooo@gamail.com</p>
      </footer>
    </div>
  );
}
